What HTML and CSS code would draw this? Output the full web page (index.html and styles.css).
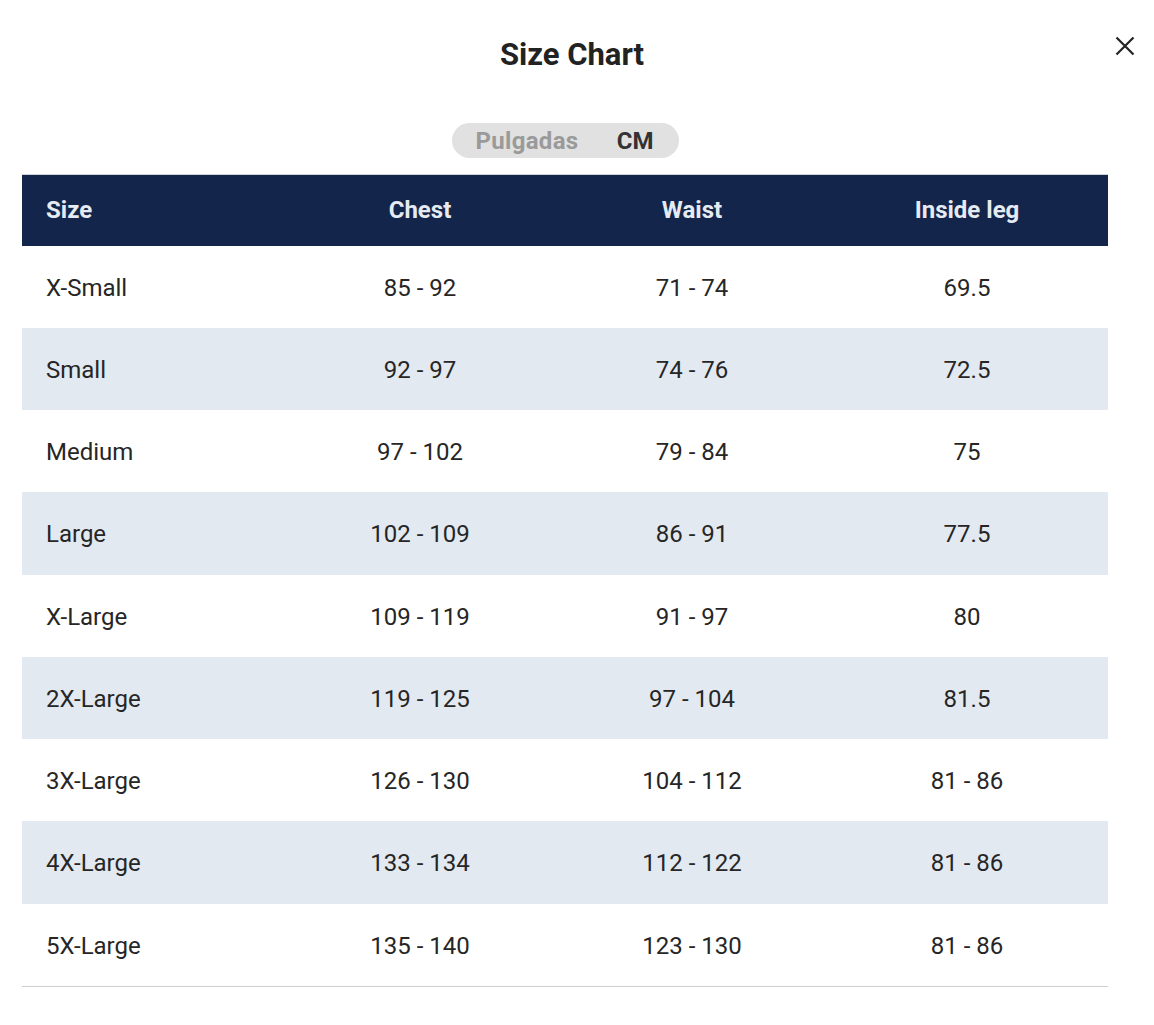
FILE: index.html
```html
<!DOCTYPE html>
<html lang="en">
<head>
<meta charset="utf-8">
<title>Size Chart</title>
<link rel="stylesheet" href="styles.css">
</head>
<body>
<div class="modal">
  <h1 class="title">Size Chart</h1>
  <button class="close" aria-label="Close">
    <svg width="20" height="20" viewBox="0 0 20 20"><path d="M1.5 1.5L18.5 18.5M18.5 1.5L1.5 18.5" stroke="#222" stroke-width="2.2" fill="none"/></svg>
  </button>
  <div class="toggle-wrap">
    <div class="toggle">
      <span class="opt">Pulgadas</span>
      <span class="opt active">CM</span>
    </div>
  </div>
  <table class="chart">
    <colgroup>
      <col class="c1"><col class="c2"><col class="c3"><col class="c4">
    </colgroup>
    <thead>
      <tr><th class="first">Size</th><th>Chest</th><th>Waist</th><th>Inside leg</th></tr>
    </thead>
    <tbody>
      <tr><td class="first">X-Small</td><td>85 - 92</td><td>71 - 74</td><td>69.5</td></tr>
      <tr><td class="first">Small</td><td>92 - 97</td><td>74 - 76</td><td>72.5</td></tr>
      <tr><td class="first">Medium</td><td>97 - 102</td><td>79 - 84</td><td>75</td></tr>
      <tr><td class="first">Large</td><td>102 - 109</td><td>86 - 91</td><td>77.5</td></tr>
      <tr><td class="first">X-Large</td><td>109 - 119</td><td>91 - 97</td><td>80</td></tr>
      <tr><td class="first">2X-Large</td><td>119 - 125</td><td>97 - 104</td><td>81.5</td></tr>
      <tr><td class="first">3X-Large</td><td>126 - 130</td><td>104 - 112</td><td>81 - 86</td></tr>
      <tr><td class="first">4X-Large</td><td>133 - 134</td><td>112 - 122</td><td>81 - 86</td></tr>
      <tr><td class="first">5X-Large</td><td>135 - 140</td><td>123 - 130</td><td>81 - 86</td></tr>
    </tbody>
  </table>
</div>
</body>
</html>
```
FILE: styles.css
```css
html, body {
  margin: 0;
  padding: 0;
  background: #fff;
}
body {
  font-family: Roboto, "Liberation Sans", Arial, sans-serif;
  color: #222;
}
.modal {
  position: relative;
  padding: 0 46px 0 22px;
  display: flex;
  flex-direction: column;
}
.title {
  margin: 0 -36px 0 -22px;
  padding-top: 35px;
  height: 40px;
  line-height: 40px;
  font-size: 31px;
  font-weight: 700;
  text-align: center;
  color: #222;
}
.close {
  position: absolute;
  top: 36px;
  right: 19px;
  width: 20px;
  height: 20px;
  padding: 0;
  border: 0;
  background: none;
  cursor: pointer;
}
.close svg { display: block; }
.toggle-wrap {
  display: flex;
  justify-content: center;
  margin-top: 48px;
}
.toggle {
  display: flex;
  align-items: center;
  height: 35px;
  width: 227px;
  box-sizing: border-box;
  padding: 0 25px 0 24px;
  justify-content: space-between;
  background: #e1e1e1;
  border-radius: 18px;
  font-size: 24px;
  font-weight: 700;
}
.opt { color: #9a9a9a; letter-spacing: 0.3px; }
.opt.active { color: #333; letter-spacing: 0; }
.chart {
  margin-top: 16px;
  width: 1086px;
  border-collapse: collapse;
  table-layout: fixed;
  font-size: 24px;
  border-top: 1px solid #cfd3d9;
  border-bottom: 1px solid #cfcfcf;
}
.c1 { width: 260px; }
.c2 { width: 276px; }
.c3 { width: 268px; }
.c4 { width: 282px; }
.chart thead tr {
  background: #13254a;
  height: 71px;
}
.chart th {
  color: #e6ebf3;
  font-weight: 700;
  text-align: center;
  padding: 0;
}
.chart td {
  text-align: center;
  height: 80.25px;
  padding: 2px 0 0;
  color: #262626;
}
.chart .first {
  text-align: left;
  padding-left: 24px;
}
.chart tbody tr:nth-child(even) {
  background: #e3e9f1;
}
```
